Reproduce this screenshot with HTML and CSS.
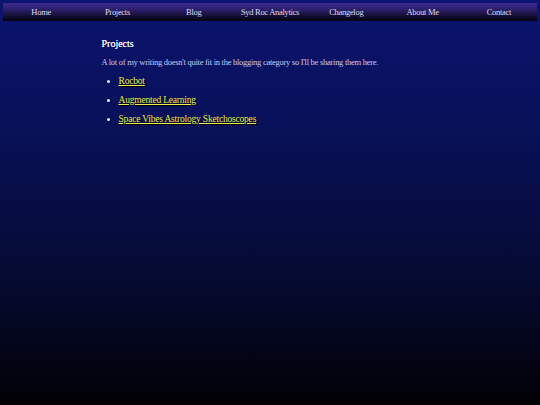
FILE: index.html
```html
<!DOCTYPE html>
<html>
<head>
<meta charset="utf-8">
<link rel="stylesheet" href="styles.css">
</head>
<body>
<nav class="nav">
  <a href="#">Home</a>
  <a href="#">Projects</a>
  <a href="#">Blog</a>
  <a href="#">Syd Roc Analytics</a>
  <a href="#">Changelog</a>
  <a href="#">About Me</a>
  <a href="#">Contact</a>
</nav>
<main class="content">
  <h1 class="title">Projects</h1>
  <p class="intro">A lot of my writing doesn't quite fit in the blogging category so I'll be sharing them here.</p>
  <ul class="list">
    <li><a href="#">Rocbot</a></li>
    <li><a href="#">Augmented Learning</a></li>
    <li><a href="#">Space Vibes Astrology Sketchoscopes</a></li>
  </ul>
</main>
</body>
</html>
```

FILE: styles.css
```css
html, body {
  margin: 0;
  height: 100%;
}
body {
  padding: 3px 3px 0;
  box-sizing: border-box;
  background: linear-gradient(to bottom, #0b1470 0%, #081055 35%, #050a30 70%, #010104 100%);
  font-family: "Liberation Serif", "DejaVu Serif", serif;
  color: #d4d4f4;
}
.nav {
  display: grid;
  grid-template-columns: repeat(7, 1fr);
  height: 18px;
  background: linear-gradient(to bottom, #3f2b92 0%, #2a1d66 40%, #0c0820 85%, #050410 100%);
}
.nav a {
  color: #dcdcee;
  text-decoration: none;
  font-size: 8.5px;
  letter-spacing: -0.3px;
  text-align: center;
  line-height: 18px;
}
.content {
  width: 338px;
  margin: 0 auto;
  padding-top: 17px;
  padding-left: 1px;
}
.title {
  font-size: 10px;
  font-weight: normal;
  color: #f4f4ff;
  margin: 0 0 8px;
  text-shadow: 0 0 0.2px #fff;
}
.intro {
  font-size: 8.5px;
  letter-spacing: -0.27px;
  margin: 0 0 8px;
  color: #cacaee;
}
.list {
  margin: 0;
  padding-left: 17px;
  color: #e8e8ff;
}
.list li {
  font-size: 9.5px;
  letter-spacing: -0.2px;
  line-height: 12px;
  margin-bottom: 7px;
  padding-left: 0;
}
.list a {
  color: #ecec4c;
  text-shadow: 1px 1px 1px #000;
}
```
